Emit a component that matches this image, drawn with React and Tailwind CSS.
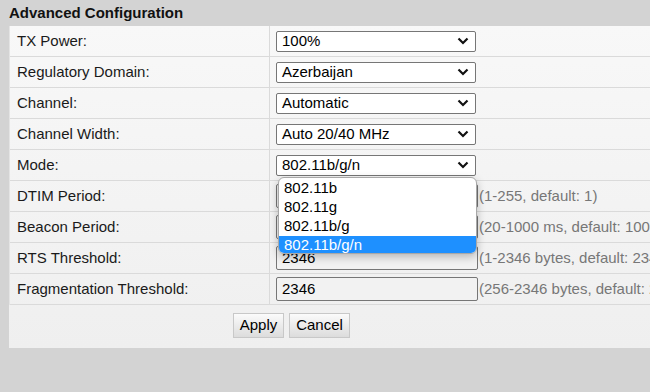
import React from 'react';

const Chevron = () => (
    <svg width="12" height="8" viewBox="0 0 12 8" className="absolute right-[6px] top-1/2 -translate-y-1/2">
        <path d="M1.5 1.5 L6 6 L10.5 1.5" fill="none" stroke="#111" strokeWidth="2.2" />
    </svg>
);

const FakeSelect = ({ value }) => (
    <div className="relative w-[200px] h-[21px] bg-white border border-[#767676] rounded-[2px] pl-[5px] flex items-center text-[15px] text-black">
        {value}
        <Chevron />
    </div>
);

const FakeInput = ({ value, hint }) => (
    <div className="flex items-center">
        <div className="w-[202px] h-[24px] bg-[#f2f2f2] border border-[#767676] rounded-[2px] pl-[5px] flex items-center text-[15px] text-black">
            {value}
        </div>
        <span className="ml-[1px] text-[15px] text-[#777] whitespace-nowrap">{hint}</span>
    </div>
);

const rows = [
    { label: "TX Power:", select: "100%" },
    { label: "Regulatory Domain:", select: "Azerbaijan" },
    { label: "Channel:", select: "Automatic" },
    { label: "Channel Width:", select: "Auto 20/40 MHz" },
    { label: "Mode:", select: "802.11b/g/n" },
    { label: "DTIM Period:", input: "1", hint: "(1-255, default: 1)" },
    { label: "Beacon Period:", input: "100", hint: "(20-1000 ms, default: 100)" },
    { label: "RTS Threshold:", input: "2346", hint: "(1-2346 bytes, default: 2346)" },
    { label: "Fragmentation Threshold:", input: "2346", hint: "(256-2346 bytes, default: 2346)" },
];

const modes = ["802.11b", "802.11g", "802.11b/g", "802.11b/g/n"];

export default function App() {
    return (
        <div className="w-[650px] h-[392px] overflow-hidden bg-[#d3d3d3] font-['Liberation_Sans',Arial,sans-serif] relative">
            <div className="h-[26px] pl-[9px] pt-[4px] text-[15px] font-bold text-[#111] leading-[17px]">
                Advanced Configuration
            </div>
            <div className="ml-[9px] w-[700px] h-[322px] bg-linear-to-b from-[#f8f8f8] to-[#efefef]">
                <div className="border-l border-[#e4e4e4]">
                    {rows.map((r) => (
                        <div key={r.label} className="flex h-[31px] border-b border-[#dadada]">
                            <div className="w-[260px] border-r border-[#dadada] pl-[7px] flex items-center text-[15px] text-[#1a1a1a]">
                                {r.label}
                            </div>
                            <div className="pl-[6px] flex items-center">
                                {r.select ? <FakeSelect value={r.select} /> : <FakeInput value={r.input} hint={r.hint} />}
                            </div>
                        </div>
                    ))}
                </div>
                <div className="flex gap-[5px] pl-[224px] pt-[8px]">
                    <button className="h-[25px] w-[51px] border border-[#c8c8c8] bg-linear-to-b from-[#fbfbfb] to-[#dcdcdc] text-[15px] text-black">
                        Apply
                    </button>
                    <button className="h-[25px] w-[61px] border border-[#c8c8c8] bg-linear-to-b from-[#fbfbfb] to-[#dcdcdc] text-[15px] text-black">
                        Cancel
                    </button>
                </div>
            </div>
            <div className="absolute left-[278px] top-[177px] w-[199px] h-[77px] bg-white border border-[#a8a8a8] rounded-[6px] shadow-[0_3px_8px_rgba(0,0,0,0.25)] overflow-hidden pt-px">
                {modes.map((m, i) => (
                    <div
                        key={m}
                        className={`h-[19px] pl-[5px] flex items-center text-[15px] ${i === 3 ? 'bg-[#1e90ff] text-white' : 'text-black'}`}
                    >
                        {m}
                    </div>
                ))}
            </div>
        </div>
    );
}
